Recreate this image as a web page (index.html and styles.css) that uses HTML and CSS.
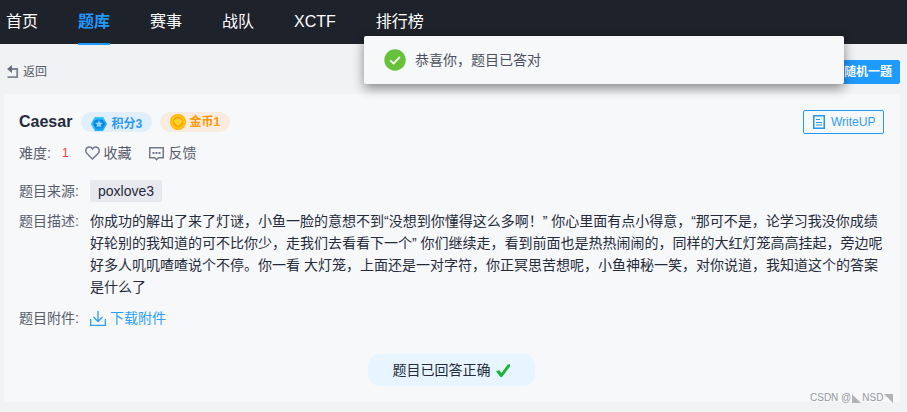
FILE: index.html
```
<!DOCTYPE html>
<html lang="zh-CN">
<head>
<meta charset="utf-8">
<title>Caesar</title>
<link rel="stylesheet" href="styles.css">
</head>
<body>
<nav class="nav">
  <a>首页</a><a class="active">题库</a><a>赛事</a><a>战队</a><a>XCTF</a><a>排行榜</a>
</nav>
<div class="toolbar">
  <a class="back">
    <svg width="12" height="14" viewBox="0 0 12 14"><path d="M4 4h6.200v8.200H.5" fill="none" stroke="#7b8290" stroke-width="1.800"/><path d="M0 4L5 0v8z" fill="#666e7e"/></svg>
    <span>返回</span>
  </a>
  <button class="random">随机一题</button>
</div>
<main class="card">
  <header class="head">
    <h1>Caesar</h1>
    <span class="tag score">
      <svg width="16" height="14" viewBox="0 0 16 14"><path d="M4 0h8l4 7-4 7H4L0 7z" fill="#20a9f5"/><path d="M4 0h8l2 3.500H2zM0 7l2-3.500 2 7L4 14z" fill="#35c5fa"/><path d="M4.500 2.500h7L14 7l-2.500 4.500h-7L2 7z" fill="#0785e4"/><path d="M8 3l1.200 2.600 2.800.3-2.100 1.900.6 2.800L8 9.200l-2.500 1.400.6-2.800L4 5.900l2.800-.3z" fill="#8bd5ff"/></svg>
      <b>积分3</b>
    </span>
    <span class="tag coin">
      <svg width="16" height="16" viewBox="0 0 16 16"><circle cx="8" cy="8" r="8" fill="#ffb400"/><circle cx="8" cy="8" r="6.800" fill="#ffcf16"/><circle cx="8" cy="8" r="5.600" fill="#ffa908"/><path d="M5.500 5h5L12.500 7.500 8 12 3.500 7.500z" fill="#ffd426"/></svg>
      <b>金币1</b>
    </span>
    <a class="writeup">
      <svg width="12" height="14" viewBox="0 0 12 14" fill="none" stroke="#2299f8"><path d="M.75.75h10.500v12.500H.75z" stroke-width="1.500"/><path d="M3 4.500h4M3 7.500h6M3 10h6" stroke-width="1.100"/></svg>
      <span>WriteUP</span>
    </a>
  </header>
  <div class="meta">
    <span>难度:</span><span class="level">1</span>
    <svg class="heart" width="15" height="14" viewBox="0 0 15 14"><path d="M7.500 13L2 7.500C-.3 5 1 1 4.300 1c1.500 0 2.600.8 3.200 1.900C8.100 1.800 9.200 1 10.700 1 14 1 15.300 5 13 7.500z" fill="none" stroke="#717987" stroke-width="1.500"/></svg>
    <span>收藏</span>
    <svg class="chat" width="15" height="14" viewBox="0 0 15 14"><path d="M.75.750h13.500v10H9.300L7.500 12.700 5.700 10.750H.75z" fill="none" stroke="#717987" stroke-width="1.500"/><path d="M3.500 5h2v2h-2zM6.500 5h2v2h-2zM9.500 5h2v2h-2z" fill="#717987"/></svg>
    <span>反馈</span>
  </div>
  <div class="row source"><span class="label">题目来源:</span><span class="author">poxlove3</span></div>
  <div class="row desc">
    <span class="label">题目描述:</span>
    <p>你成功的解出了来了灯谜，小鱼一脸的意想不到“没想到你懂得这么多啊！” 你心里面有点小得意，“那可不是，论学习我没你成绩<br>好轮别的我知道的可不比你少，走我们去看看下一个” 你们继续走，看到前面也是热热闹闹的，同样的大红灯笼高高挂起，旁边呢<br>好多人叽叽喳喳说个不停。你一看 大灯笼，上面还是一对字符，你正冥思苦想呢，小鱼神秘一笑，对你说道，我知道这个的答案<br>是什么了</p>
  </div>
  <div class="row attach">
    <span class="label">题目附件:</span>
    <a class="download"><svg width="16" height="15" viewBox="0 0 16 15" fill="none" stroke="#2b9ef8" stroke-width="1.300"><path d="M8 0v10M3.500 6L8 10.500 12.500 6M.65 8v6.300h14.700V8"/></svg><span>下载附件</span></a>
  </div>
  <div class="result"><span>题目已回答正确</span><svg width="14" height="13" viewBox="0 0 14 13"><path d="M0 7.500L3 6l2.500 3L11.500.700 14 0v2.500L6 13H4.500z" fill="#1cb33a"/></svg></div>
</main>
<div class="toast">
  <svg width="22" height="22" viewBox="0 0 22 22"><circle cx="11" cy="11" r="10.700" fill="#67c23a"/><path d="M6.200 11.300l3.400 3.200 6.300-6.600" fill="none" stroke="#fff" stroke-width="1.700"/></svg>
  <span>恭喜你，题目已答对</span>
</div>
<div class="watermark"><span>CSDN @</span><svg width="9" height="9" viewBox="0 0 9 9"><path d="M0 0v9h9z" fill="#b2b3b5"/></svg><span>NSD</span><svg width="9" height="9" viewBox="0 0 9 9"><path d="M0 0h9v9z" fill="#b2b3b5"/></svg></div>
</body>
</html>
```
FILE: styles.css
```
* { box-sizing: border-box; }
body {
  margin: 0;
  width: 907px;
  height: 412px;
  overflow: hidden;
  background: #f1f2f4;
  color: #252b3a;
  font: 14px/22px "Liberation Sans", "Noto Sans CJK SC", sans-serif;
}
svg { display: block; flex: none; }
span, b, a { white-space: nowrap; }
.nav {
  display: flex;
  gap: 40px;
  height: 44px;
  padding-left: 6px;
  background: #1e222b;
  color: #fff;
  font-size: 16px;
  line-height: 44px;
}
.nav .active {
  height: 45px;
  color: #2299ff;
  font-weight: bold;
  border-bottom: 2px solid #1e9bff;
}
.toolbar {
  display: flex;
  align-items: center;
  justify-content: space-between;
  height: 50px;
  padding: 6px 7px 0 7px;
}
.back { display: flex; align-items: center; gap: 4px; color: #575d6c; font-size: 12px; }
.random {
  width: 64px;
  height: 24px;
  padding: 0;
  border: 0;
  border-radius: 2px;
  background: #1e9bff;
  color: #fff;
  font: bold 12px/24px "Liberation Sans", "Noto Sans CJK SC", sans-serif;
}
.card {
  width: 896px;
  height: 308px;
  margin-left: 4px;
  padding: 16px 16px 0 15px;
  background: #f7f8fa;
}
.head { display: flex; align-items: center; height: 24px; }
h1 { margin: 0; font-size: 16px; line-height: 24px; }
.tag {
  display: flex;
  align-items: center;
  height: 20px;
  border-radius: 10px;
  font-size: 12px;
  line-height: 20px;
}
.score { width: 71px; gap: 4px; margin-left: 9px; padding: 3px 0 0 10px; background: #e1effb; color: #2b98f5; }
.coin { width: 70px; gap: 3px; margin-left: 8px; padding-left: 10px; background: #f8ece1; color: #ff9800; }
.writeup {
  display: flex;
  align-items: center;
  gap: 6px;
  width: 81px;
  height: 24px;
  margin-left: auto;
  padding-left: 9px;
  border: 1px solid #2299f8;
  border-radius: 2px;
  color: #2f9bf5;
  font-size: 12px;
}
.meta { display: flex; align-items: center; height: 22px; margin-top: 8px; color: #575d6c; }
.level { margin-left: 11px; color: #f03a48; font-size: 12px; }
.heart { margin: 0 4px 0 16px; }
.chat { margin: 2px 5px 0 17px; }
.row { display: flex; align-items: flex-start; }
.label { width: 71px; flex: none; color: #575d6c; }
.source { margin-top: 16px; height: 22px; }
.author { padding: 0 8px; border-radius: 2px; background: #e8e9ef; }
.desc { margin-top: 8px; }
.desc p { margin: 0; white-space: nowrap; }
.attach { margin-top: 9px; }
.download { display: flex; align-items: center; gap: 4px; color: #2b9ef8; }
.result {
  display: flex;
  align-items: center;
  justify-content: center;
  gap: 5px;
  width: 167px;
  height: 32px;
  margin: 25px auto 0 349px;
  padding-right: 1px;
  border-radius: 12px;
  background: #e6f5ff;
}
.toast {
  position: absolute;
  top: 36px;
  left: 364px;
  display: flex;
  align-items: center;
  gap: 9px;
  width: 480px;
  height: 48px;
  padding-left: 20px;
  border-radius: 2px;
  background: #f7f8fa;
  color: #4a5060;
  box-shadow: 0 4px 12px rgba(0, 0, 0, .45);
}
.watermark {
  position: absolute;
  top: 390px;
  left: 810px;
  display: flex;
  align-items: center;
  gap: 1px;
  color: #97989b;
  font-size: 10px;
  line-height: 16px;
}
```
